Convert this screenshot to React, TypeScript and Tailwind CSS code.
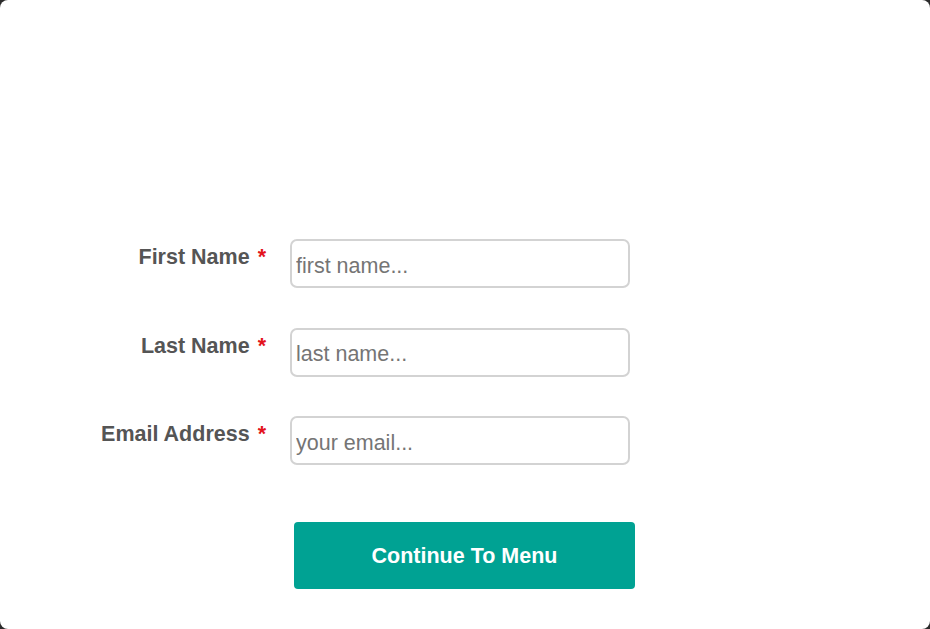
const fields = [
	{ label: 'First Name', placeholder: 'first name...' },
	{ label: 'Last Name', placeholder: 'last name...' },
	{ label: 'Email Address', placeholder: 'your email...' },
];

const App = () => {
	return (
		<div className="h-[629px] w-[930px] bg-[#2b2b2b] font-['Liberation_Sans',Arial,sans-serif]">
			<div className="flex h-full w-full flex-col rounded-[8px] bg-white pt-[239px]">
				<form className="flex flex-col gap-[39.5px]">
					{fields.map((f) => (
						<div key={f.label} className="flex items-start gap-[24px]">
							<label className="w-[266px] pt-[6px] text-right text-[21.5px] leading-[24px] font-bold text-[#555555]">
								{f.label}
								<span className="ml-[8px] text-[#e3131b]">*</span>
							</label>
							<input
								type="text"
								placeholder={f.placeholder}
								className="h-[49px] w-[340px] rounded-[7px] border-2 border-[#d3d3d3] bg-white px-[4px] pt-[5px] text-[21.5px] text-[#555555] outline-none placeholder:text-[#757575]"
							/>
						</div>
					))}

					<div className="flex pt-[17px] pl-[294px]">
						<button
							type="button"
							className="h-[67px] w-[341px] rounded-[4px] bg-[#00a293] pt-[2px] text-[21.5px] font-bold text-white"
						>
							Continue To Menu
						</button>
					</div>
				</form>
			</div>
		</div>
	);
};

export default App;
